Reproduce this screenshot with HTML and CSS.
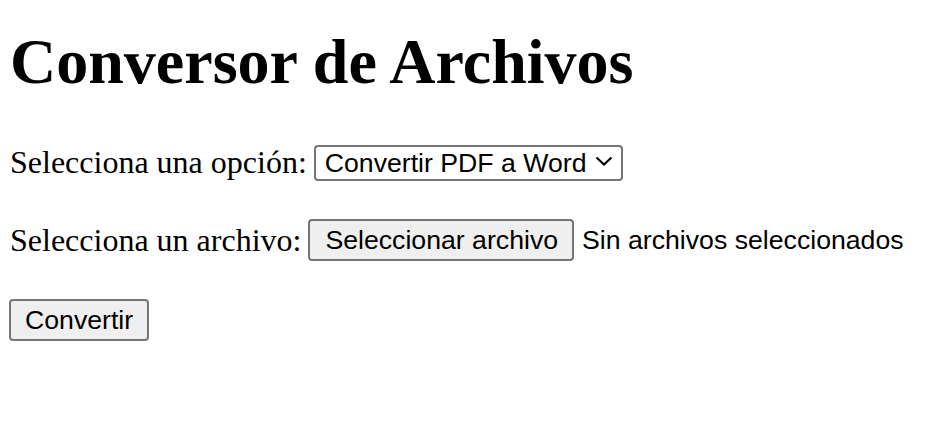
FILE: index.html
```html
<!DOCTYPE html>
<html lang="es">
<head>
<meta charset="utf-8">
<title>Conversor de Archivos</title>
<link rel="stylesheet" href="styles.css">
</head>
<body>
<h1 class="title">Conversor de Archivos</h1>
<form class="form">
  <div class="row row-select">
    <label class="label" for="opcion">Selecciona una opción:</label>
    <span class="select-wrap">
      <select class="select" id="opcion">
        <option>Convertir PDF a Word</option>
        <option>Convertir Word a PDF</option>
      </select>
      <svg class="chevron" width="18" height="10" viewBox="0 0 18 10"><path d="M1.5 1.5 L9 8.5 L16.5 1.5" fill="none" stroke="#000" stroke-width="2.2"/></svg>
    </span>
  </div>
  <div class="row row-file">
    <label class="label">Selecciona un archivo:</label>
    <button type="button" class="btn btn-file">Seleccionar archivo</button>
    <span class="file-name">Sin archivos seleccionados</span>
  </div>
  <div class="row row-submit">
    <button type="button" class="btn btn-submit">Convertir</button>
  </div>
</form>
</body>
</html>
```

FILE: styles.css
```css
html, body {
  background: #fff;
}
body {
  margin: 0;
  padding: 0 0 0 10px;
  font-family: "Liberation Serif", "Times New Roman", serif;
  font-size: 32px;
  color: #000;
}
.title {
  margin: 25px 0 0;
  font-size: 64px;
  line-height: 74px;
  font-weight: bold;
}
.form {
  margin: 0;
}
.row {
  display: flex;
  align-items: center;
  height: 42px;
}
.row-select {
  margin-top: 42px;
}
.row-file {
  margin-top: 36px;
}
.row-submit {
  margin-top: 38px;
}
.label {
  line-height: 37px;
  margin-right: 8px;
}
.select-wrap {
  position: relative;
  display: inline-block;
  margin-left: -1px;
}
.select {
  appearance: none;
  -webkit-appearance: none;
  box-sizing: border-box;
  width: 309px;
  height: 36px;
  margin: 0;
  padding: 0 0 0 9px;
  border: 2px solid #767676;
  border-radius: 4px;
  background: #fff;
  color: #000;
  font-family: "Liberation Sans", Arial, sans-serif;
  font-size: 26.67px;
  line-height: 30px;
  outline: none;
}
.chevron {
  position: absolute;
  right: 10px;
  top: 13px;
  pointer-events: none;
}
.btn {
  box-sizing: border-box;
  height: 42px;
  margin: 0;
  padding: 0 14px;
  border: 2px solid #767676;
  border-radius: 4px;
  background: #efefef;
  color: #000;
  font-family: "Liberation Sans", Arial, sans-serif;
  font-size: 26.67px;
  line-height: 30px;
}
.btn-file {
  margin-left: -1px;
  padding: 0 14px 0 15px;
}
.btn-submit {
  margin-left: -1px;
}
.file-name {
  margin-left: 8px;
  font-family: "Liberation Sans", Arial, sans-serif;
  font-size: 26.67px;
  line-height: 30px;
}
```
